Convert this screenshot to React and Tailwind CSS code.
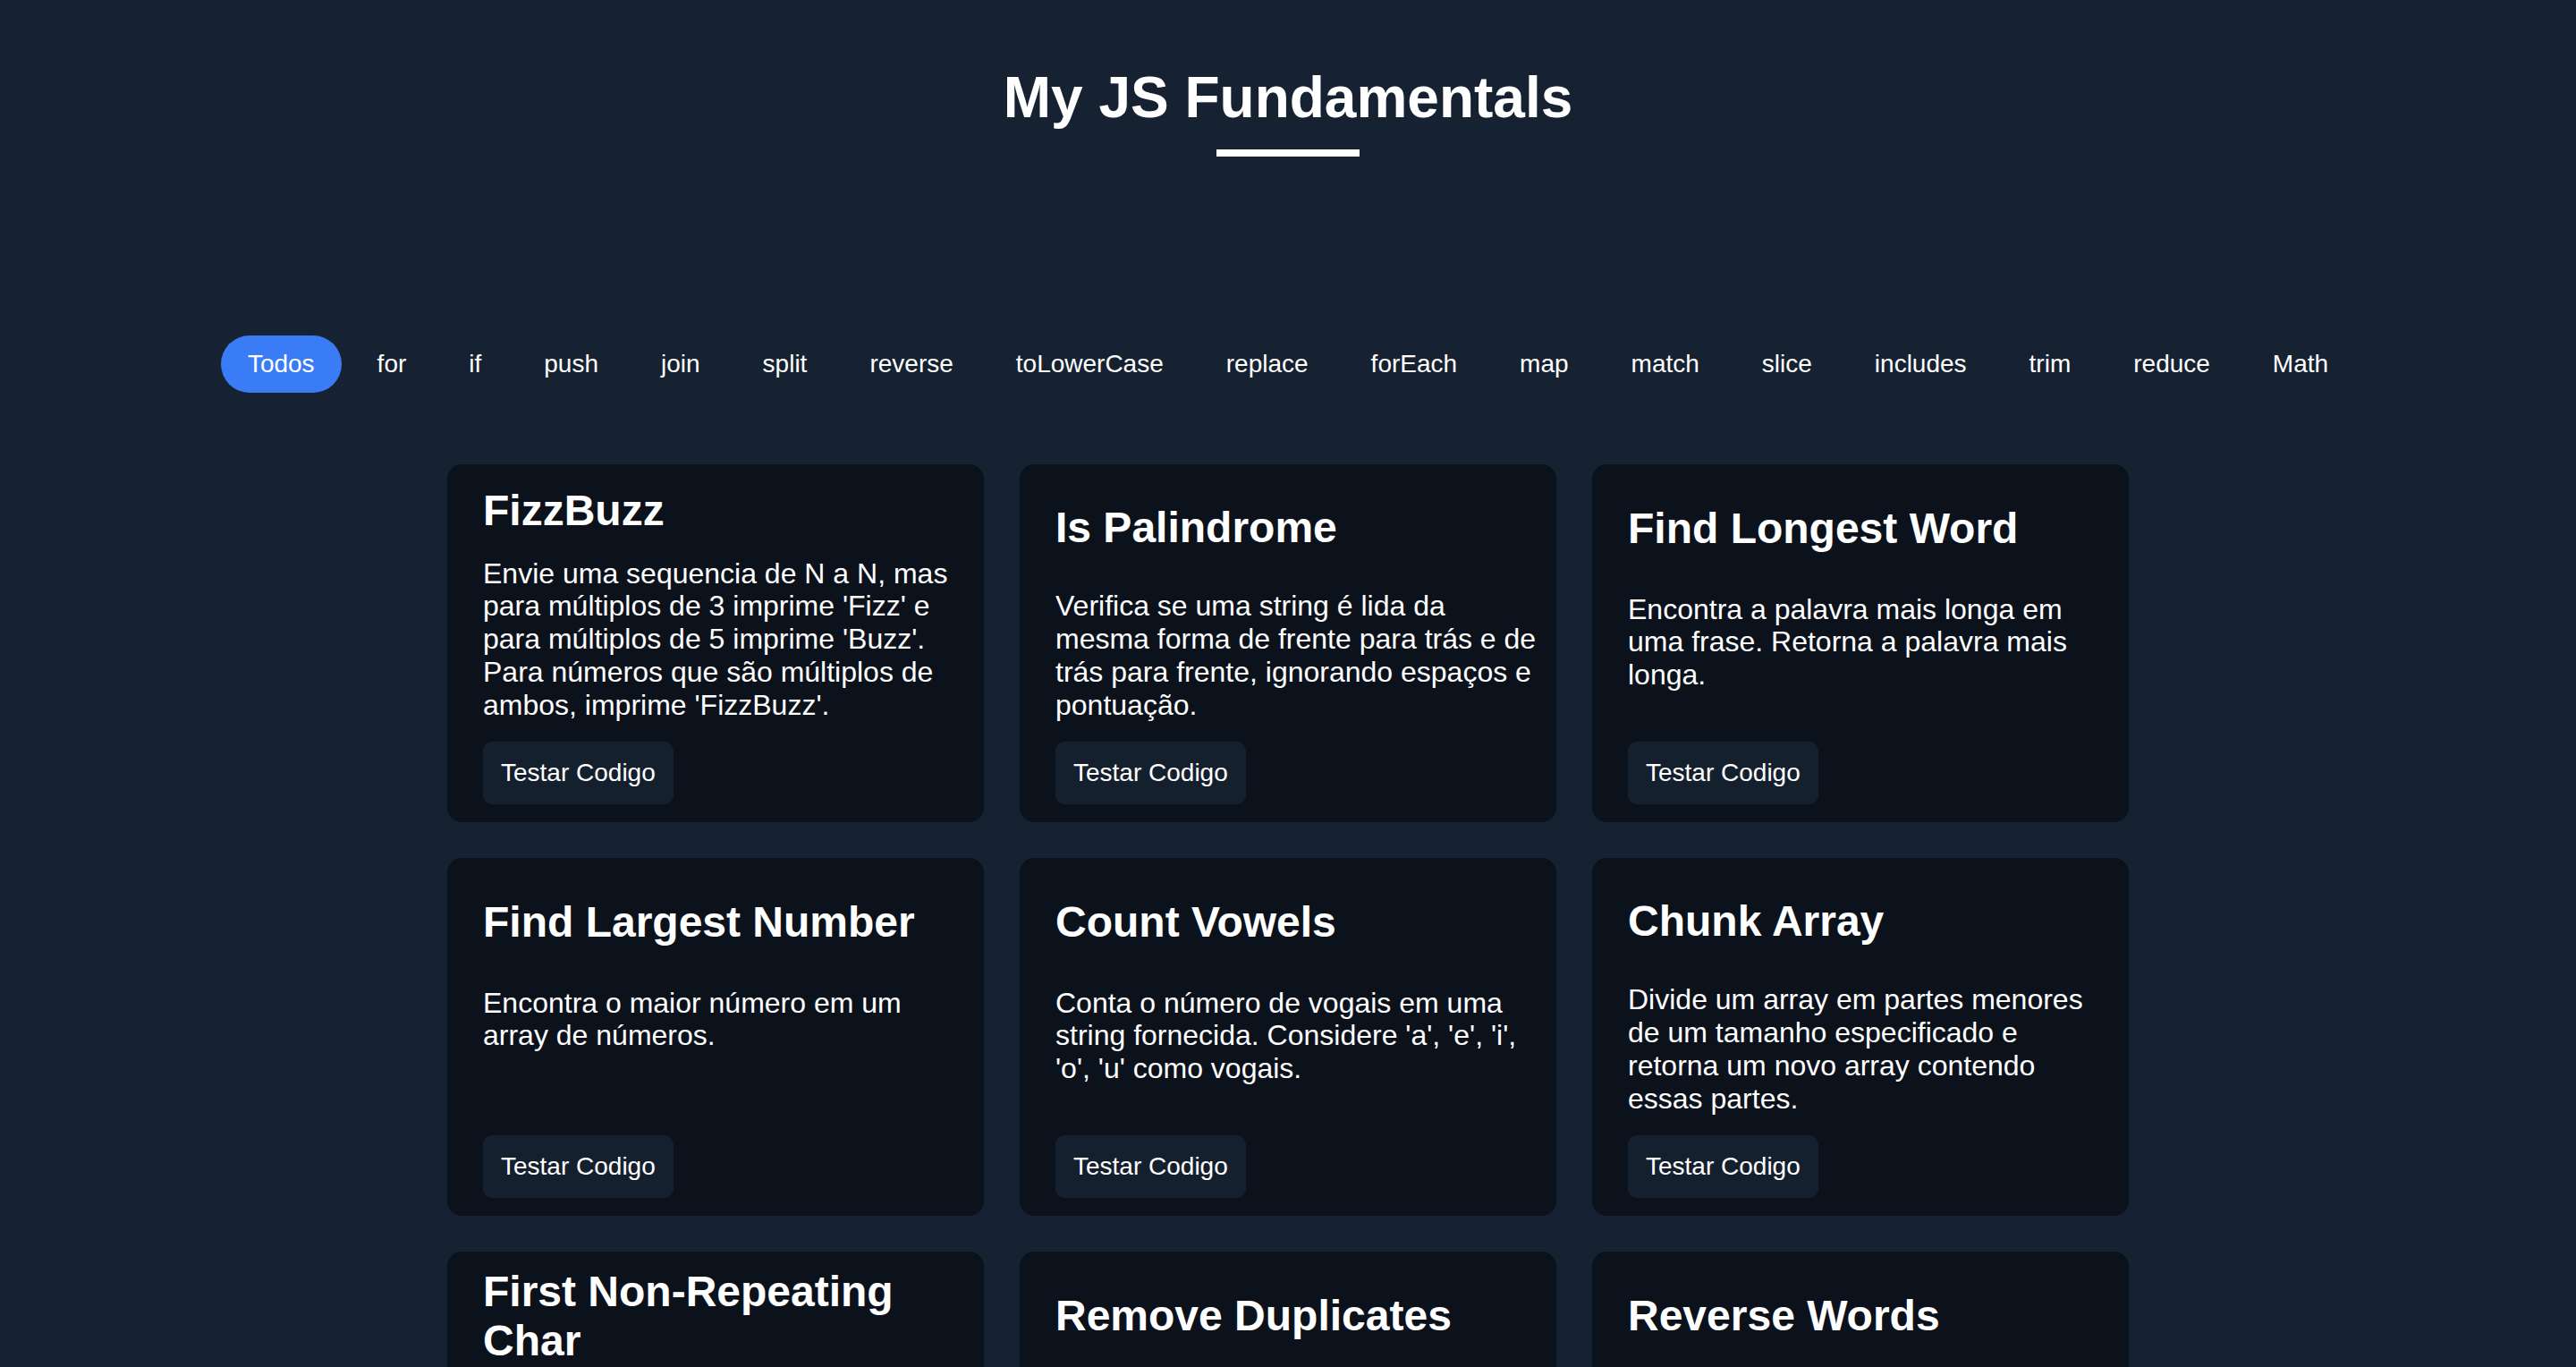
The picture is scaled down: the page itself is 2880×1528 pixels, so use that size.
import React from "react";

const filters = [
  "Todos", "for", "if", "push", "join", "split", "reverse", "toLowerCase", "replace",
  "forEach", "map", "match", "slice", "includes", "trim", "reduce", "Math",
];

const cards = [
  {
    title: "FizzBuzz",
    desc: "Envie uma sequencia de N a N, mas para múltiplos de 3 imprime 'Fizz' e para múltiplos de 5 imprime 'Buzz'. Para números que são múltiplos de ambos, imprime 'FizzBuzz'.",
  },
  {
    title: "Is Palindrome",
    desc: "Verifica se uma string é lida da mesma forma de frente para trás e de trás para frente, ignorando espaços e pontuação.",
  },
  {
    title: "Find Longest Word",
    desc: "Encontra a palavra mais longa em uma frase. Retorna a palavra mais longa.",
  },
  {
    title: "Find Largest Number",
    desc: "Encontra o maior número em um array de números.",
  },
  {
    title: "Count Vowels",
    desc: "Conta o número de vogais em uma string fornecida. Considere 'a', 'e', 'i', 'o', 'u' como vogais.",
  },
  {
    title: "Chunk Array",
    desc: "Divide um array em partes menores de um tamanho especificado e retorna um novo array contendo essas partes.",
  },
  {
    title: "First Non-Repeating Char",
    desc: "Encontra o primeiro caractere que não se repete em uma string.",
  },
  {
    title: "Remove Duplicates",
    desc: "Remove os elementos duplicados de um array, retornando um novo array com valores únicos.",
  },
  {
    title: "Reverse Words",
    desc: "Inverte a ordem das palavras em uma frase.",
  },
];

function Card({ title, desc }) {
  return (
    <div className="flex flex-col h-[400px] rounded-[16px] bg-[#0c121c] pl-[40px] pr-[20px] pb-[20px]">
      <h2 className="flex-1 flex items-center text-[48px] font-bold leading-[1.15] text-white">
        <span>{title}</span>
      </h2>
      <p className="flex-1 mb-[22px] text-[32px] leading-[1.15] text-white">{desc}</p>
      <button className="self-start rounded-[10px] bg-[#15202f] px-[20px] py-[19px] text-[28px] leading-[1.15] text-white">
        Testar Codigo
      </button>
    </div>
  );
}

export default function App() {
  return (
    <div className="min-h-screen bg-[#162232] font-['Liberation_Sans',Arial,Helvetica,sans-serif] leading-[1.15] text-white pb-[80px]">
      <header className="flex flex-col items-center pt-[73px]">
        <h1 className="text-[64px] font-bold leading-[1.15] text-white">My JS Fundamentals</h1>
        <div className="mt-[20px] h-[8px] w-[160px] bg-white" />
      </header>

      <nav className="mt-[200px] flex justify-center gap-[10px]">
        {filters.map((f, i) => (
          <button
            key={f}
            className={
              i === 0
                ? "rounded-full bg-[#3a7cf6] px-[30px] py-[16px] text-[28px] leading-[1.15] text-white"
                : "rounded-full px-[30px] py-[16px] text-[28px] leading-[1.15] text-white"
            }
          >
            {f}
          </button>
        ))}
      </nav>

      <main className="mt-[80px] mx-auto grid w-[1880px] grid-cols-3 gap-[40px]">
        {cards.map((c) => (
          <Card key={c.title} {...c} />
        ))}
      </main>
    </div>
  );
}
